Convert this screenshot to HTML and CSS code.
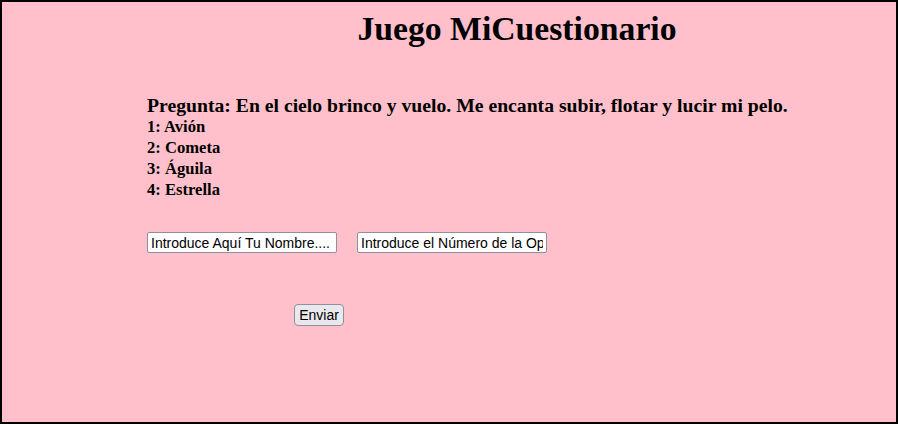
FILE: index.html
```html
<!DOCTYPE html>
<html lang="es">
<head>
<meta charset="utf-8">
<title>Juego MiCuestionario</title>
<link rel="stylesheet" href="styles.css">
</head>
<body>
<div class="frame">
  <div class="content">
    <h1 class="title">Juego MiCuestionario</h1>
    <h2 class="question">Pregunta: En el cielo brinco y vuelo. Me encanta subir, flotar y lucir mi pelo.</h2>
    <div class="options">
      <div class="option">1: Avión</div>
      <div class="option">2: Cometa</div>
      <div class="option">3: Águila</div>
      <div class="option">4: Estrella</div>
    </div>
    <div class="fields">
      <input class="field" type="text" value="Introduce Aquí Tu Nombre....">
      <input class="field" type="text" value="Introduce el Número de la Opción">
    </div>
    <div class="actions">
      <button class="send" type="button">Enviar</button>
    </div>
  </div>
</div>
</body>
</html>
```

FILE: styles.css
```css
html, body {
  margin: 0;
  padding: 0;
  background: #ffc0cb;
}
.frame {
  box-sizing: border-box;
  width: 898px;
  height: 424px;
  border: 2px solid #000;
  background: #ffc0cb;
  font-family: "Liberation Serif", "Times New Roman", serif;
  color: #000;
}
.content {
  padding: 0 9px 0 145px;
}
.title {
  margin: 8px 0 0;
  font-size: 33.7px;
  font-weight: bold;
  text-align: center;
  line-height: 37px;
}
.question {
  margin: 47px 0 0;
  font-size: 19.7px;
  font-weight: bold;
  line-height: 23px;
}
.options {
  margin-top: -1px;
  font-size: 16.6px;
  font-weight: bold;
  line-height: 21px;
}
.fields {
  display: flex;
  gap: 20px;
  margin-top: 32px;
}
.field {
  box-sizing: border-box;
  width: 190px;
  height: 21px;
  margin: 0;
  padding: 0 3px;
  border: 1px solid #8f8f9d;
  border-radius: 2px;
  background: #fff;
  font-family: "Liberation Sans", Arial, sans-serif;
  font-size: 14px;
  color: #000;
}
.actions {
  margin-top: 51px;
  padding-left: 147px;
}
.send {
  box-sizing: border-box;
  width: 50px;
  height: 22px;
  margin: 0;
  padding: 0;
  border: 1px solid #8f8f9d;
  border-radius: 4px;
  background: #e9e9ed;
  font-family: "Liberation Sans", Arial, sans-serif;
  font-size: 14px;
  color: #000;
}
```
